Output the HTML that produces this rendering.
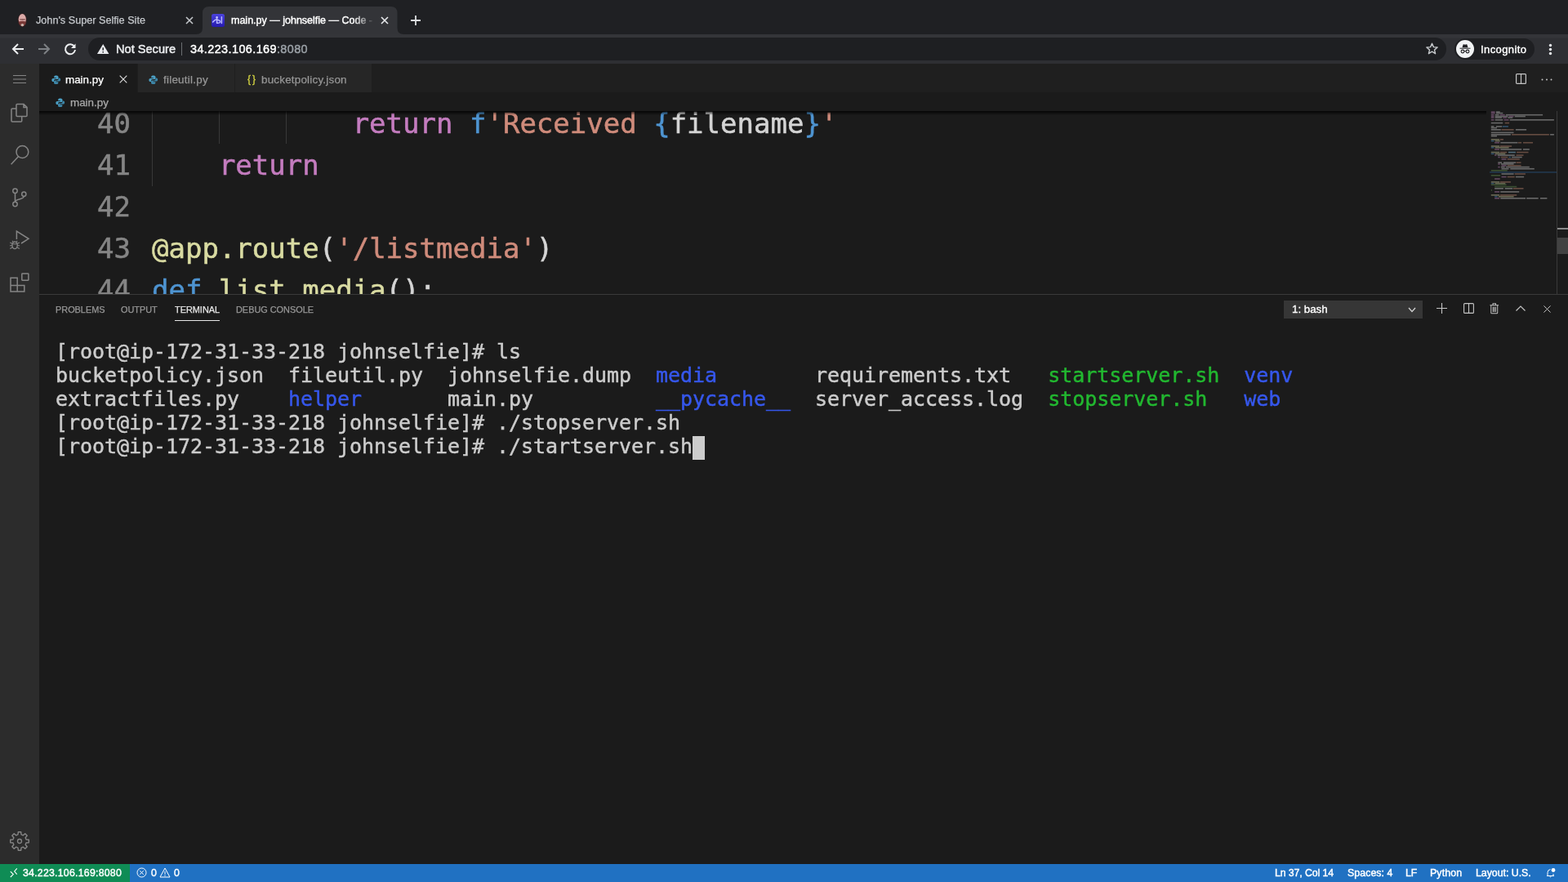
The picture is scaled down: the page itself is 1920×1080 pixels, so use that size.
<!DOCTYPE html>
<html lang="en">
<head>
<meta charset="utf-8">
<title>main.py — johnselfie — Code</title>
<style>
*{box-sizing:border-box;margin:0;padding:0}
html,body{width:1920px;height:1080px;overflow:hidden;background:#1b1b1b}
body{font-family:"Liberation Sans",sans-serif;color:#ccc;position:relative}
.abs{position:absolute}
.t{will-change:transform;position:absolute;white-space:pre;line-height:1;-webkit-text-stroke:0.25px}
svg{position:absolute;overflow:visible}
/* chrome */
#frame{left:0;top:0;width:1920px;height:42px;background:#1f2023}
#toolbar{left:0;top:41.500px;width:1920px;height:37px;background:linear-gradient(#343539 0,#343539 4px,#2e2f33 5px,#2e2f33 100%)}
#tab2{left:248px;top:8px;width:240px;height:34px;background:#35363a;border-radius:8px 8px 0 0}
#omni{left:108px;top:46px;width:1663px;height:28px;border-radius:14px;background:#1e1f22}
#incog{left:1781px;top:47px;width:98px;height:26px;border-radius:13px;background:#1e1f22}
/* vscode */
#act{left:0;top:78px;width:48px;height:980px;background:#2c2c2c}
#tabs{left:48px;top:78px;width:1872px;height:35px;background:#1f1f1f}
.tab{position:absolute;top:0;height:35px;background:#262626}
#crumbs{left:48px;top:113px;width:1872px;height:23px;background:#1b1b1b}
#editor{left:48px;top:136px;width:1872px;height:224px;background:#1b1b1b;overflow:hidden}
.code{font-family:"DejaVu Sans Mono","Liberation Mono",monospace;font-size:34px;-webkit-text-stroke:0.5px}
.ln{color:#858585}
#panel{left:48px;top:360px;width:1872px;height:698px;background:#1b1b1b;border-top:1px solid #3a3a3a}
.term{font-family:"DejaVu Sans Mono","Liberation Mono",monospace;font-size:25px;letter-spacing:-0.05px;color:#cccccc;-webkit-text-stroke:0.45px}
.bl{color:#3657ec}.gr{color:#22b830}
.ptab{font-size:10.9px;color:#969696}
#status{left:0;top:1058px;width:1920px;height:22px;background:#2071c2}
#remote{left:0;top:0;width:159px;height:22px;background:#0f8c55}
.st{font-size:12.3px;color:#fff;top:5px;-webkit-text-stroke:0.4px}
</style>
</head>
<body>
<!-- ===== Chrome frame ===== -->
<div class="abs" id="frame"></div>
<div class="abs" id="toolbar"></div>
<svg style="left:0;top:0" width="520" height="42" viewBox="0 0 520 42"><path d="M240 42Q248 42 248 34V16Q248 8 256 8H478.500Q486.500 8 486.500 16V34Q486.500 42 494.500 42Z" fill="#333438"/></svg>
<div class="abs" id="omni"></div>
<div class="abs" id="incog"></div>


<!-- chrome tab 1 -->
<svg style="left:0;top:0" width="48" height="42" viewBox="0 0 48 42"><ellipse cx="27.300" cy="24.700" rx="5.500" ry="8.100" fill="#3a1f20"/><ellipse cx="27.300" cy="23.600" rx="4.600" ry="6.500" fill="#dbaaa8"/><ellipse cx="27.600" cy="23.800" rx="3.800" ry="0.900" fill="#8a5a58"/><path d="M23 26.500Q27.300 25 31.800 26.500Q31.500 31.500 27.300 32.600Q23.500 31.500 23 26.500Z" fill="#7a3a38"/><ellipse cx="27.400" cy="30.600" rx="1.800" ry="1.700" fill="#c9b5ad"/></svg>
<div class="t" id="t1" style="left:44px;top:19px;font-size:12.66px;color:#c6c9cd">John's Super Selfie Site</div>
<svg style="left:227px;top:20px" width="10" height="10" viewBox="0 0 10 10"><path d="M1 1L9 9M9 1L1 9" stroke="#c3c6ca" stroke-width="1.6" fill="none"/></svg>
<!-- chrome tab 2 -->
<svg style="left:259px;top:17px" width="16" height="16" viewBox="0 0 16 16"><defs><linearGradient id="fg" x1="0" y1="0" x2="0" y2="1"><stop offset="0" stop-color="#4a42dc"/><stop offset="1" stop-color="#261aae"/></linearGradient></defs><rect width="16" height="16" rx="2.500" fill="url(#fg)"/><circle cx="6.600" cy="4.300" r="1.200" fill="#d0d0ff"/><path d="M6.600 5V11.300M6.600 6.500Q3.500 7.500 1.600 10M6.600 7Q11 8 10.600 10Q10 11.600 6.600 11.300M12.400 3.800V11.600" stroke="#b8b8ff" stroke-width="1.500" fill="none" stroke-linecap="round"/></svg>
<div class="t" id="t2" style="left:283px;top:19px;font-size:12.5px;color:#ffffff;-webkit-text-stroke:0.4px;width:176px;overflow:hidden;-webkit-mask-image:linear-gradient(90deg,#000 150px,transparent 176px);mask-image:linear-gradient(90deg,#000 150px,transparent 176px)"><span id="t2a">main.py — johnselfie — Code</span> -</div>
<svg style="left:466px;top:20px" width="10" height="10" viewBox="0 0 10 10"><path d="M1 1L9 9M9 1L1 9" stroke="#e8eaed" stroke-width="1.600" fill="none"/></svg>
<svg style="left:502px;top:18px" width="14" height="14" viewBox="0 0 14 14"><path d="M7 1V13M1 7H13" stroke="#dcdee1" stroke-width="1.800" fill="none"/></svg>
<!-- nav buttons -->
<svg style="left:14px;top:52px" width="16" height="16" viewBox="0 0 16 16"><path d="M15 8H2.500M8 2L2 8L8 14" stroke="#eceef0" stroke-width="2" fill="none"/></svg>
<svg style="left:46px;top:52px" width="16" height="16" viewBox="0 0 16 16"><path d="M1 8H13.500M8 2L14 8L8 14" stroke="#7d8084" stroke-width="2" fill="none"/></svg>
<svg style="left:78px;top:52px" width="16" height="16" viewBox="0 0 16 16"><path d="M13.200 5.200A6 6 0 1 0 14 9" stroke="#eceef0" stroke-width="2" fill="none"/><path d="M14.500 1.500V7H9Z" fill="#eceef0"/></svg>
<!-- omnibox content -->
<svg style="left:118.800px;top:53.800px" width="14.400" height="12" viewBox="0 0 15 13" preserveAspectRatio="none"><path d="M7.500 0L15 13H0Z" fill="#e8eaed"/><path d="M7.500 4.500V8.500M7.500 9.800V11.300" stroke="#202124" stroke-width="1.500"/></svg>
<div class="t" id="t3" style="left:142px;top:53px;font-size:14.6px;color:#eceef0;-webkit-text-stroke:0.45px">Not Secure</div>
<div class="abs" style="left:222px;top:52px;width:1px;height:16px;background:#6b6e72"></div>
<div class="t" id="t4" style="left:233px;top:53px;font-size:14.4px;letter-spacing:0.42px;color:#ffffff;-webkit-text-stroke:0.45px">34.223.106.169<span style="color:#9aa0a6">:8080</span></div>
<svg style="left:1746px;top:52px" width="15" height="15" viewBox="0 0 15 15"><path d="M7.500 1.200L9.400 5.600L14.100 6L10.500 9.100L11.600 13.700L7.500 11.200L3.400 13.700L4.500 9.100L0.900 6L5.600 5.600Z" stroke="#c7cacd" stroke-width="1.400" fill="none" stroke-linejoin="round"/></svg>
<!-- incognito -->
<svg style="left:1783px;top:49px" width="22" height="22" viewBox="0 0 22 22"><circle cx="11" cy="11" r="11" fill="#f1f3f4"/><path d="M7.500 9.200L8.600 5.600Q8.800 5 9.400 5.200L11 5.800L12.600 5.200Q13.200 5 13.400 5.600L14.500 9.200Z" fill="#202124"/><rect x="4.500" y="9.700" width="13" height="1" fill="#202124"/><circle cx="8" cy="14" r="1.900" fill="none" stroke="#202124" stroke-width="1.100"/><circle cx="14" cy="14" r="1.900" fill="none" stroke="#202124" stroke-width="1.100"/><path d="M9.900 13.700H12.100" stroke="#202124" stroke-width="1"/></svg>
<div class="t" id="t5" style="left:1813px;top:53.500px;font-size:13px;letter-spacing:0.41px;color:#ffffff;-webkit-text-stroke:0.4px">Incognito</div>
<svg style="left:1896px;top:53px" width="5" height="15" viewBox="0 0 5 15"><circle cx="2.500" cy="2.500" r="1.700" fill="#e8eaed"/><circle cx="2.500" cy="7.500" r="1.700" fill="#e8eaed"/><circle cx="2.500" cy="12.500" r="1.700" fill="#e8eaed"/></svg>

<!-- ===== VS Code ===== -->
<div class="abs" id="act"></div>
<div class="abs" id="tabs">
  <div class="tab" style="left:0;width:120px;background:#1b1b1b"></div>
  <div class="tab" style="left:121px;width:118px"></div>
  <div class="tab" style="left:240px;width:166.500px"></div>
</div>
<div class="abs" id="crumbs"></div>
<div class="abs" id="editor"></div>
<div class="abs" id="panel"></div>

<!-- activity bar icons -->
<svg style="left:0;top:78px" width="48" height="980" viewBox="0 78 48 980" fill="none" stroke="#858585" stroke-width="1.500">
<path d="M16 92.500H32M16 97H32M16 101.500H32" stroke-width="1.100"/>
<path d="M21 127.400H29L33 131.400V141.600Q33 142.600 32 142.600H21Q20 142.600 20 141.600V128.400Q20 127.400 21 127.400ZM29 127.400V131.400H33M20 133H15Q14 133 14 134V148Q14 149 15 149H25.700Q26.700 149 26.700 148V142.600"/>
<circle cx="27.400" cy="186" r="7.400"/><path d="M22.600 191.600L13.600 201.200"/>
<circle cx="18.500" cy="233.700" r="2.700"/><circle cx="18.500" cy="250" r="2.700"/><circle cx="29.300" cy="237.700" r="2.600"/>
<path d="M18.500 236.400V247.300M29.300 240.300C29.300 245 18.500 243 18.500 247.300"/>
<path d="M20.400 293V283L35 292.300L26 298" stroke-linejoin="miter"/>
<ellipse cx="18.100" cy="300.300" rx="3.200" ry="4.300" stroke-width="1.400"/>
<path d="M15.300 298.700H20.900M12.300 297L14.900 298.300M12 300.800H14.900M12.300 304.500L15.100 303M23.900 297L21.300 298.300M24.200 300.800H21.300M23.900 304.500L21.100 303M16.300 296.500L15 294.800M19.900 296.500L21.200 294.800" stroke-width="1.100"/>
<path d="M13 340.200H21.200V357H13ZM13 349.400H29.800V357H21.200M21.200 349.400V357"/>
<rect x="26.800" y="335.100" width="8.100" height="8.100" rx="0.600"/>
<path d="M21.95 1021.96L22.30 1018.73L25.70 1018.73L26.05 1021.96L28.23 1022.86L30.77 1020.82L33.18 1023.23L31.14 1025.77L32.04 1027.95L35.27 1028.30L35.27 1031.70L32.04 1032.05L31.14 1034.23L33.18 1036.77L30.77 1039.18L28.23 1037.14L26.05 1038.04L25.70 1041.27L22.30 1041.27L21.95 1038.04L19.77 1037.14L17.23 1039.18L14.82 1036.77L16.86 1034.23L15.96 1032.05L12.73 1031.70L12.73 1028.30L15.96 1027.95L16.86 1025.77L14.82 1023.23L17.23 1020.82L19.77 1022.86Z" stroke-linejoin="round" stroke-width="1.400"/><circle cx="24" cy="1030" r="2.500" stroke-width="1.300"/>
</svg>
<!-- editor tabs -->
<svg style="left:62.500px;top:91.500px" width="11.500" height="11.500" viewBox="0 0 13 13"><path d="M6.300 0.500C4.500 0.500 3.600 1.200 3.600 2.400V3.800H6.600V4.400H2.300C1.100 4.400 0.400 5.300 0.400 6.700C0.400 8.100 1.100 9 2.300 9H3.400V7.500C3.400 6.400 4.300 5.600 5.400 5.600H8.100C9 5.600 9.600 5 9.600 4.100V2.400C9.600 1.200 8.400 0.500 6.300 0.500Z" fill="#4b9fc4"/><path d="M6.700 12.500C8.500 12.500 9.400 11.800 9.400 10.600V9.200H6.400V8.600H10.700C11.900 8.600 12.600 7.700 12.600 6.300C12.600 4.900 11.900 4 10.700 4H9.600V5.500C9.600 6.600 8.700 7.400 7.600 7.400H4.900C4 7.400 3.400 8 3.400 8.900V10.600C3.400 11.800 4.600 12.500 6.700 12.500Z" fill="#3d86a8"/></svg>
<div class="t" id="v1" style="left:80px;top:91px;font-size:13.4px;color:#ffffff">main.py</div>
<svg style="left:146px;top:92px" width="10" height="10" viewBox="0 0 10 10"><path d="M0.700 0.700L9.300 9.300M9.300 0.700L0.700 9.300" stroke="#e0e0e0" stroke-width="1.100"/></svg>
<svg style="left:182.300px;top:91.500px" width="11.500" height="11.500" viewBox="0 0 13 13"><path d="M6.300 0.500C4.500 0.500 3.600 1.200 3.600 2.400V3.800H6.600V4.400H2.300C1.100 4.400 0.400 5.300 0.400 6.700C0.400 8.100 1.100 9 2.300 9H3.400V7.500C3.400 6.400 4.300 5.600 5.400 5.600H8.100C9 5.600 9.600 5 9.600 4.100V2.400C9.600 1.200 8.400 0.500 6.300 0.500Z" fill="#4b9fc4"/><path d="M6.700 12.500C8.500 12.500 9.400 11.800 9.400 10.600V9.200H6.400V8.600H10.700C11.900 8.600 12.600 7.700 12.600 6.300C12.600 4.900 11.900 4 10.700 4H9.600V5.500C9.600 6.600 8.700 7.400 7.600 7.400H4.900C4 7.400 3.400 8 3.400 8.900V10.600C3.400 11.800 4.600 12.500 6.700 12.500Z" fill="#3d86a8"/></svg>
<div class="t" id="v2" style="left:200px;top:91px;font-size:13.4px;letter-spacing:0.25px;color:#969696">fileutil.py</div>
<div class="t" id="v3b" style="left:303px;top:90.500px;font-size:12px;color:#cbcb41;-webkit-text-stroke:0.4px;letter-spacing:2px">{}</div>
<div class="t" id="v3" style="left:320px;top:91px;font-size:13.4px;letter-spacing:0.22px;color:#969696">bucketpolicy.json</div>
<svg style="left:1856px;top:90px" width="13" height="13" viewBox="0 0 13 13"><rect x="0.600" y="0.600" width="11.800" height="11.800" rx="1" fill="none" stroke="#c5c5c5" stroke-width="1.200"/><path d="M6.500 0.600V12.400" stroke="#c5c5c5" stroke-width="1.200"/></svg>
<svg style="left:1887px;top:96px" width="14" height="3" viewBox="0 0 14 3"><circle cx="1.500" cy="1.500" r="1" fill="#c5c5c5"/><circle cx="7" cy="1.500" r="1" fill="#c5c5c5"/><circle cx="12.500" cy="1.500" r="1" fill="#c5c5c5"/></svg>
<!-- breadcrumbs -->
<svg style="left:67.800px;top:119.500px" width="11.500" height="11.500" viewBox="0 0 13 13"><path d="M6.300 0.500C4.500 0.500 3.600 1.200 3.600 2.400V3.800H6.600V4.400H2.300C1.100 4.400 0.400 5.300 0.400 6.700C0.400 8.100 1.100 9 2.300 9H3.400V7.500C3.400 6.400 4.300 5.600 5.400 5.600H8.100C9 5.600 9.600 5 9.600 4.100V2.400C9.600 1.200 8.400 0.500 6.300 0.500Z" fill="#4b9fc4"/><path d="M6.700 12.500C8.500 12.500 9.400 11.800 9.400 10.600V9.200H6.400V8.600H10.700C11.900 8.600 12.600 7.700 12.600 6.300C12.600 4.900 11.900 4 10.700 4H9.600V5.500C9.600 6.600 8.700 7.400 7.600 7.400H4.900C4 7.400 3.400 8 3.400 8.900V10.600C3.400 11.800 4.600 12.500 6.700 12.500Z" fill="#3d86a8"/></svg>
<div class="t" id="v4" style="left:86px;top:119px;font-size:13.4px;color:#a9a9a9">main.py</div>


<!-- editor code -->
<div class="abs" style="left:186px;top:136px;width:1px;height:92px;background:#383838"></div>
<div class="abs" style="left:268px;top:136px;width:1px;height:40px;background:#383838"></div>
<div class="abs" style="left:350px;top:136px;width:1px;height:40px;background:#383838"></div>
<div id="codewrap" class="abs" style="left:48px;top:136px;width:1872px;height:224px;overflow:hidden">
<div class="t code ln" id="n40" style="right:1760px;top:-2px">40</div>
<div class="t code ln" id="n41" style="right:1760px;top:49px">41</div>
<div class="t code ln" id="n42" style="right:1760px;top:100px">42</div>
<div class="t code ln" id="n43" style="right:1760px;top:151px">43</div>
<div class="t code ln" id="n44" style="right:1760px;top:202px">44</div>
<div class="t code" id="c40" style="left:138px;top:-2px"><span style="color:#c47cbf">            return</span> <span style="color:#4e94d1">f</span><span style="color:#cf8b7b">'Received </span><span style="color:#4e94d1">{</span><span style="color:#d4d4d4">filename</span><span style="color:#4e94d1">}</span><span style="color:#cf8b7b">'</span></div>
<div class="t code" id="c41" style="left:138px;top:49px"><span style="color:#c47cbf">    return</span></div>
<div class="t code" id="c43" style="left:138px;top:151px"><span style="color:#d9dba2">@app.route</span><span style="color:#d4d4d4">(</span><span style="color:#cf8b7b">'/listmedia'</span><span style="color:#d4d4d4">)</span></div>
<div class="t code" id="c44" style="left:138px;top:202px"><span style="color:#4e94d1">def</span> <span style="color:#d9dba2">list_media</span><span style="color:#d4d4d4">():</span></div>
</div>
<div class="abs" style="left:48px;top:136px;width:1772px;height:5px;background:linear-gradient(#000000cc,#00000000)"></div>
<!-- minimap / scrollbar -->
<div class="abs" style="left:1906px;top:136px;width:1px;height:224px;background:#3a3a3a"></div>
<div class="abs" style="left:1907px;top:279px;width:13px;height:2px;background:#8a8a8a"></div>
<div class="abs" style="left:1907px;top:291px;width:13px;height:20px;background:#424242"></div>
<svg style="left:0;top:0" width="1920" height="360" viewBox="0 0 1920 360"><rect x="1824" y="210.400" width="82" height="1.100" fill="#264f78" opacity="0.800"/><g opacity="0.42"><rect x="1825.8" y="136.3" width="4.8" height="1.600" fill="#c586c0"/><rect x="1831.9" y="136.3" width="4.8" height="1.600" fill="#d4d4d4"/><rect x="1825.8" y="137.8" width="4.8" height="1.600" fill="#c586c0"/><rect x="1831.9" y="137.8" width="8.4" height="1.600" fill="#d4d4d4"/><rect x="1825.8" y="139.9" width="3.6" height="1.600" fill="#c586c0"/><rect x="1830.7" y="139.9" width="4.8" height="1.600" fill="#d4d4d4"/><rect x="1836.7" y="139.9" width="6.0" height="1.600" fill="#c586c0"/><rect x="1843.9" y="139.9" width="45.2" height="1.600" fill="#d4d4d4"/><rect x="1825.8" y="141.7" width="3.6" height="1.600" fill="#c586c0"/><rect x="1830.7" y="141.7" width="15.7" height="1.600" fill="#d4d4d4"/><rect x="1847.5" y="141.7" width="6.0" height="1.600" fill="#c586c0"/><rect x="1854.7" y="141.7" width="13.2" height="1.600" fill="#d4d4d4"/><rect x="1825.8" y="143.3" width="3.6" height="1.600" fill="#c586c0"/><rect x="1830.7" y="143.3" width="8.4" height="1.600" fill="#d4d4d4"/><rect x="1840.3" y="143.3" width="4.8" height="1.600" fill="#c586c0"/><rect x="1846.3" y="143.3" width="6.0" height="1.600" fill="#d4d4d4"/><rect x="1825.8" y="146.0" width="3.6" height="1.600" fill="#c586c0"/><rect x="1830.7" y="146.0" width="9.6" height="1.600" fill="#d4d4d4"/><rect x="1841.5" y="146.0" width="6.0" height="1.600" fill="#c586c0"/><rect x="1848.7" y="146.0" width="54.2" height="1.600" fill="#d4d4d4"/><rect x="1825.8" y="149.8" width="14.4" height="1.600" fill="#d4d4d4"/><rect x="1842.7" y="149.8" width="5.4" height="1.600" fill="#ce9178"/><rect x="1825.8" y="154.1" width="3.6" height="1.600" fill="#d4d4d4"/><rect x="1831.9" y="154.1" width="7.2" height="1.600" fill="#d4d4d4"/><rect x="1839.7" y="154.1" width="7.2" height="1.600" fill="#569cd6"/><rect x="1825.8" y="155.8" width="7.2" height="1.600" fill="#d4d4d4"/><rect x="1825.8" y="158.0" width="12.0" height="1.600" fill="#d4d4d4"/><rect x="1838.5" y="158.0" width="15.1" height="1.600" fill="#ce9178"/><rect x="1855.9" y="158.0" width="13.2" height="1.600" fill="#d4d4d4"/><rect x="1825.8" y="161.6" width="27.7" height="1.600" fill="#d4d4d4"/><rect x="1825.8" y="164.0" width="24.1" height="1.600" fill="#d4d4d4"/><rect x="1851.1" y="164.0" width="45.8" height="1.600" fill="#ce9178"/><rect x="1898.1" y="164.0" width="4.8" height="1.600" fill="#d4d4d4"/><rect x="1825.8" y="165.8" width="7.2" height="1.600" fill="#d4d4d4"/><rect x="1825.8" y="170.0" width="10.2" height="1.600" fill="#dcdcaa"/><rect x="1836.7" y="170.0" width="4.2" height="1.600" fill="#ce9178"/><rect x="1825.8" y="171.8" width="3.6" height="1.600" fill="#569cd6"/><rect x="1830.7" y="171.8" width="6.0" height="1.600" fill="#dcdcaa"/><rect x="1830.1" y="173.9" width="6.0" height="1.600" fill="#c586c0"/><rect x="1837.3" y="173.9" width="21.1" height="1.600" fill="#d4d4d4"/><rect x="1858.9" y="173.9" width="4.2" height="1.600" fill="#ce9178"/><rect x="1865.0" y="173.9" width="12.0" height="1.600" fill="#ce9178"/><rect x="1825.8" y="178.2" width="10.2" height="1.600" fill="#dcdcaa"/><rect x="1836.7" y="178.2" width="14.4" height="1.600" fill="#ce9178"/><rect x="1825.8" y="179.9" width="3.6" height="1.600" fill="#569cd6"/><rect x="1830.7" y="179.9" width="16.9" height="1.600" fill="#dcdcaa"/><rect x="1830.1" y="182.1" width="6.0" height="1.600" fill="#c586c0"/><rect x="1837.3" y="182.1" width="25.9" height="1.600" fill="#d4d4d4"/><rect x="1865.0" y="182.1" width="7.8" height="1.600" fill="#d4d4d4"/><rect x="1825.8" y="185.7" width="10.2" height="1.600" fill="#dcdcaa"/><rect x="1836.7" y="185.7" width="8.4" height="1.600" fill="#ce9178"/><rect x="1846.9" y="185.7" width="9.0" height="1.600" fill="#9cdcfe"/><rect x="1857.1" y="185.7" width="14.4" height="1.600" fill="#ce9178"/><rect x="1825.8" y="187.5" width="3.6" height="1.600" fill="#569cd6"/><rect x="1830.7" y="187.5" width="12.6" height="1.600" fill="#dcdcaa"/><rect x="1830.1" y="189.3" width="2.4" height="1.600" fill="#c586c0"/><rect x="1833.7" y="189.3" width="21.1" height="1.600" fill="#d4d4d4"/><rect x="1856.5" y="189.3" width="9.0" height="1.600" fill="#ce9178"/><rect x="1834.3" y="191.7" width="2.4" height="1.600" fill="#c586c0"/><rect x="1837.9" y="191.7" width="8.4" height="1.600" fill="#ce9178"/><rect x="1847.5" y="191.7" width="2.4" height="1.600" fill="#569cd6"/><rect x="1851.1" y="191.7" width="12.6" height="1.600" fill="#d4d4d4"/><rect x="1838.5" y="194.1" width="6.0" height="1.600" fill="#c586c0"/><rect x="1845.7" y="194.1" width="15.1" height="1.600" fill="#ce9178"/><rect x="1834.3" y="198.3" width="4.8" height="1.600" fill="#d4d4d4"/><rect x="1840.9" y="198.3" width="15.1" height="1.600" fill="#d4d4d4"/><rect x="1856.5" y="198.3" width="6.0" height="1.600" fill="#ce9178"/><rect x="1834.3" y="200.1" width="2.4" height="1.600" fill="#c586c0"/><rect x="1837.9" y="200.1" width="15.7" height="1.600" fill="#d4d4d4"/><rect x="1838.5" y="201.9" width="6.0" height="1.600" fill="#c586c0"/><rect x="1845.7" y="201.9" width="16.9" height="1.600" fill="#ce9178"/><rect x="1834.3" y="203.8" width="2.4" height="1.600" fill="#c586c0"/><rect x="1837.9" y="203.8" width="4.8" height="1.600" fill="#d4d4d4"/><rect x="1843.9" y="203.8" width="28.9" height="1.600" fill="#d4d4d4"/><rect x="1838.5" y="205.9" width="9.0" height="1.600" fill="#d4d4d4"/><rect x="1849.3" y="205.9" width="29.5" height="1.600" fill="#d4d4d4"/><rect x="1825.8" y="208.0" width="19.9" height="1.600" fill="#6a9955"/><rect x="1838.5" y="212.2" width="15.1" height="1.600" fill="#d4d4d4"/><rect x="1854.7" y="212.2" width="13.2" height="1.600" fill="#ce9178"/><rect x="1825.8" y="214.0" width="11.4" height="1.600" fill="#6a9955"/><rect x="1838.5" y="215.8" width="6.0" height="1.600" fill="#c586c0"/><rect x="1845.7" y="215.8" width="9.0" height="1.600" fill="#ce9178"/><rect x="1855.9" y="215.8" width="10.2" height="1.600" fill="#d4d4d4"/><rect x="1830.1" y="218.2" width="6.6" height="1.600" fill="#c586c0"/><rect x="1825.8" y="222.1" width="10.2" height="1.600" fill="#dcdcaa"/><rect x="1836.7" y="222.1" width="13.2" height="1.600" fill="#ce9178"/><rect x="1825.8" y="223.9" width="3.6" height="1.600" fill="#569cd6"/><rect x="1830.7" y="223.9" width="12.6" height="1.600" fill="#dcdcaa"/><rect x="1825.8" y="225.4" width="18.7" height="1.600" fill="#6a9955"/><rect x="1830.1" y="227.8" width="27.1" height="1.600" fill="#6a9955"/><rect x="1830.1" y="230.0" width="10.8" height="1.600" fill="#d4d4d4"/><rect x="1842.7" y="230.0" width="9.6" height="1.600" fill="#d4d4d4"/><rect x="1852.9" y="230.0" width="12.6" height="1.600" fill="#ce9178"/><rect x="1825.8" y="232.1" width="1.2" height="1.600" fill="#6a9955"/><rect x="1830.1" y="234.1" width="6.0" height="1.600" fill="#c586c0"/><rect x="1837.3" y="234.1" width="22.9" height="1.600" fill="#d4d4d4"/><rect x="1825.8" y="238.1" width="10.2" height="1.600" fill="#dcdcaa"/><rect x="1836.7" y="238.1" width="20.5" height="1.600" fill="#ce9178"/><rect x="1830.1" y="239.9" width="3.6" height="1.600" fill="#569cd6"/><rect x="1834.9" y="239.9" width="18.7" height="1.600" fill="#dcdcaa"/><rect x="1830.1" y="242.0" width="6.0" height="1.600" fill="#c586c0"/><rect x="1837.3" y="242.0" width="30.7" height="1.600" fill="#d4d4d4"/><rect x="1869.2" y="242.0" width="14.4" height="1.600" fill="#d4d4d4"/><rect x="1886.0" y="242.0" width="8.4" height="1.600" fill="#d4d4d4"/></g></svg>

<!-- panel header -->
<div class="t ptab" id="p1" style="left:68px;top:374px">PROBLEMS</div>
<div class="t ptab" id="p2" style="left:148px;top:374px">OUTPUT</div>
<div class="t ptab" id="p3" style="left:214px;top:374px;color:#e7e7e7">TERMINAL</div>
<div class="abs" style="left:214px;top:392px;width:55px;height:1px;background:#e7e7e7"></div>
<div class="t ptab" id="p4" style="left:289px;top:374px">DEBUG CONSOLE</div>
<div class="abs" style="left:1572px;top:368px;width:170px;height:22px;background:#363636"></div>
<div class="t" id="p5" style="left:1581.500px;top:372px;font-size:13.3px;color:#ffffff;-webkit-text-stroke:0.35px">1: bash</div>
<svg style="left:1724px;top:376.300px" width="10" height="7" viewBox="0 0 10 7"><path d="M1 1L5 5.500L9 1" fill="none" stroke="#d0d0d0" stroke-width="1.300"/></svg>
<svg style="left:1759px;top:371px" width="13" height="13" viewBox="0 0 13 13"><path d="M6.500 0V13M0 6.500H13" stroke="#c5c5c5" stroke-width="1.100"/></svg>
<svg style="left:1792px;top:371px" width="13" height="13" viewBox="0 0 13 13"><rect x="0.600" y="0.600" width="11.800" height="11.800" rx="1" fill="none" stroke="#c5c5c5" stroke-width="1.100"/><path d="M6.500 0.600V12.400" stroke="#c5c5c5" stroke-width="1.100"/></svg>
<svg style="left:1824px;top:370.700px" width="11.500" height="13.400" viewBox="0 0 13 14" preserveAspectRatio="none"><path d="M0.500 2.800H12.500M4.500 2.500V0.800H8.500V2.500M2 3V12.500Q2 13.300 2.800 13.300H10.200Q11 13.300 11 12.500V3M4.700 5V11.500M6.500 5V11.500M8.300 5V11.500" fill="none" stroke="#c5c5c5" stroke-width="1.100"/></svg>
<svg style="left:1856px;top:374px" width="12" height="7" viewBox="0 0 12 7"><path d="M0.500 6.500L6 1L11.500 6.500" fill="none" stroke="#c5c5c5" stroke-width="1.200"/></svg>
<svg style="left:1889.500px;top:373.500px" width="9" height="9" viewBox="0 0 10 10"><path d="M0.500 0.500L9.500 9.500M9.500 0.500L0.500 9.500" stroke="#c5c5c5" stroke-width="1.100"/></svg>
<!-- terminal -->
<div class="t term" id="r1" style="left:68px;top:418px">[root@ip-172-31-33-218 johnselfie]# ls</div>
<div class="t term" id="r2" style="left:68px;top:447px">bucketpolicy.json  fileutil.py  johnselfie.dump  <span class="bl">media</span>        requirements.txt   <span class="gr">startserver.sh</span>  <span class="bl">venv</span></div>
<div class="t term" id="r3" style="left:68px;top:476px">extractfiles.py    <span class="bl">helper</span>       main.py          <span class="bl">__pycache__</span>  server_access.log  <span class="gr">stopserver.sh</span>   <span class="bl">web</span></div>
<div class="t term" id="r4" style="left:68px;top:505px">[root@ip-172-31-33-218 johnselfie]# ./stopserver.sh</div>
<div class="t term" id="r5" style="left:68px;top:534px">[root@ip-172-31-33-218 johnselfie]# ./startserver.sh</div>
<div class="abs" style="left:848px;top:534px;width:15px;height:29px;background:#cccccc"></div>
<div class="abs" id="status"><div class="abs" id="remote"></div>
<svg style="left:11px;top:4px" width="12" height="13" viewBox="0 0 12 13"><path d="M1.800 5.200L5.300 8.600L1.800 12M9.800 1.300L6.700 5L9.800 8.600" fill="none" stroke="#fff" stroke-width="1.100"/></svg>
<div class="t st" id="s1" style="left:27.500px;letter-spacing:0.25px">34.223.106.169:8080</div>
<svg style="left:167px;top:4px" width="13" height="13" viewBox="0 0 13 13"><circle cx="6.500" cy="6.500" r="5.500" fill="none" stroke="#fff" stroke-width="1"/><path d="M4.300 4.300L8.700 8.700M8.700 4.300L4.300 8.700" stroke="#fff" stroke-width="1"/></svg>
<div class="t st" id="s2" style="left:184.500px">0</div>
<svg style="left:195px;top:4px" width="14" height="13" viewBox="0 0 14 13"><path d="M7 1L13 12H1Z" fill="none" stroke="#fff" stroke-width="1" stroke-linejoin="round"/><path d="M7 4.800V8.600M7 9.600V10.800" stroke="#fff" stroke-width="1"/></svg>
<div class="t st" id="s3" style="left:212.500px">0</div>
<div class="t st" id="s4" style="left:1560.500px;letter-spacing:-0.09px">Ln 37, Col 14</div>
<div class="t st" id="s5" style="left:1649.500px;letter-spacing:0.09px">Spaces: 4</div>
<div class="t st" id="s6" style="left:1721px">LF</div>
<div class="t st" id="s7" style="left:1750.700px;letter-spacing:0.16px">Python</div>
<div class="t st" id="s8" style="left:1807px">Layout: U.S.</div>
<svg style="left:1892px;top:4px" width="14" height="14" viewBox="0 0 14 14"><path d="M2 10.500H11M3 10.500V6.500Q3 3 6.500 2.500M10 10.500V8M5.500 11Q6.500 12.800 7.500 11" fill="none" stroke="#fff" stroke-width="1"/><circle cx="10" cy="3.500" r="2.400" fill="#fff"/></svg>
</div>
</body>
</html>
